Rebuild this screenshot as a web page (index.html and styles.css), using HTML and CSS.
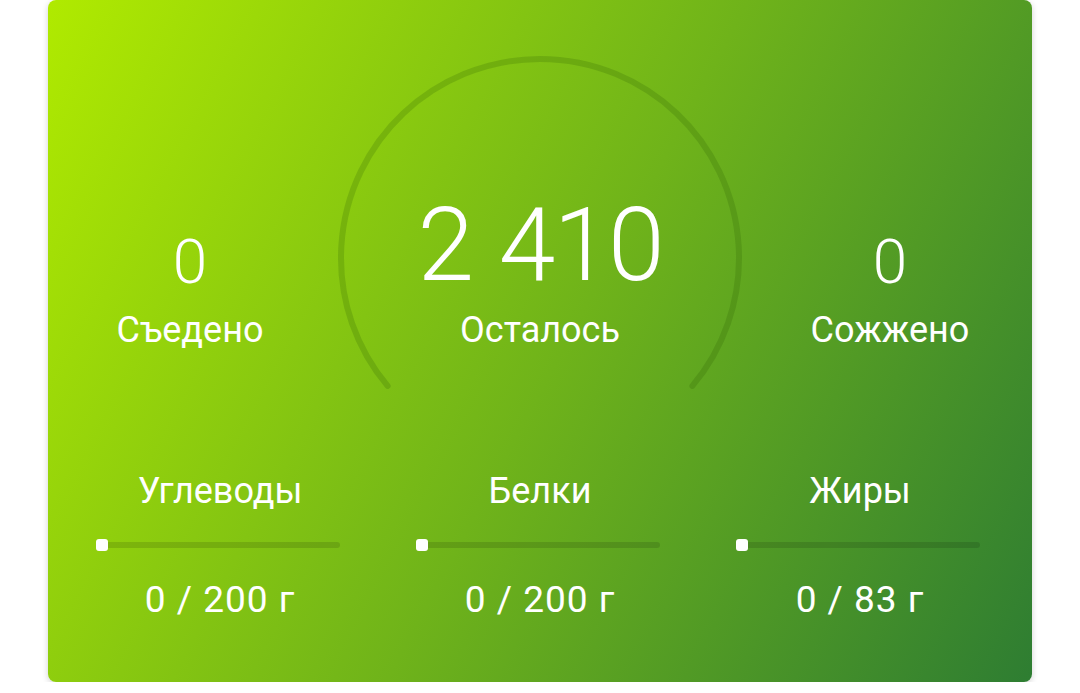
FILE: index.html
```html
<!DOCTYPE html>
<html lang="ru">
<head>
<meta charset="utf-8">
<link rel="stylesheet" href="styles.css">
</head>
<body>
<div class="card">
  <div class="summary">
    <div class="stat">
      <div class="num">0</div>
      <div class="label">Съедено</div>
    </div>
    <div class="stat stat-main">
      <svg class="gauge" width="416" height="340" viewBox="0 0 416 340">
        <path class="gauge-track" d="M 55.6 330.9 A 199 199 0 1 1 360.4 330.9" fill="none"/>
      </svg>
      <div class="num num-big">2 410</div>
      <div class="label">Осталось</div>
    </div>
    <div class="stat">
      <div class="num">0</div>
      <div class="label">Сожжено</div>
    </div>
  </div>
  <div class="macros">
    <div class="macro">
      <div class="macro-name">Углеводы</div>
      <div class="bar"><div class="thumb"></div></div>
      <div class="macro-val">0 / 200 г</div>
    </div>
    <div class="macro">
      <div class="macro-name">Белки</div>
      <div class="bar"><div class="thumb"></div></div>
      <div class="macro-val">0 / 200 г</div>
    </div>
    <div class="macro">
      <div class="macro-name">Жиры</div>
      <div class="bar"><div class="thumb"></div></div>
      <div class="macro-val">0 / 83 г</div>
    </div>
  </div>
</div>
</body>
</html>
```
FILE: styles.css
```css
* { box-sizing: border-box; }
html, body { margin: 0; padding: 0; background: #fff; }
body {
  font-family: Roboto, "Noto Sans", sans-serif;
  color: #fff;
}
.card {
  margin: 0 48px;
  height: 682px;
  border-radius: 8px;
  background: linear-gradient(118deg, #b0ea00 0%, #6fb31a 52%, #2e7d32 100%);
  box-shadow: 0 2px 6px rgba(0,0,0,0.18);
  padding-top: 55px;
}
.summary {
  display: grid;
  grid-template-columns: 1fr 416px 1fr;
  height: 340px;
  align-items: end;
  padding-bottom: 45px;
}
.stat {
  display: flex;
  flex-direction: column;
  align-items: center;
}
.stat-main { position: relative; height: 100%; justify-content: flex-end; }
.gauge {
  position: absolute;
  left: 0;
  top: 0;
  width: 416px;
  height: 340px;
  overflow: visible;
}
.gauge-track {
  stroke: rgba(40, 90, 0, 0.2);
  stroke-width: 6;
  stroke-linecap: round;
}
.num {
  font-size: 62px;
  font-weight: 300;
  line-height: 60px;
  margin-bottom: 18px;
}
.num-big {
  font-size: 102px;
  font-weight: 300;
  letter-spacing: -2px;
  word-spacing: 4px;
  line-height: 100px;
  margin-bottom: 15px;
  position: relative;
}
.label {
  font-size: 36px;
  line-height: 40px;
  position: relative;
}
.macros {
  display: grid;
  grid-template-columns: repeat(3, 1fr);
  padding: 76px 12px 0;
}
.macro {
  display: flex;
  flex-direction: column;
  align-items: center;
}
.macro-name {
  font-size: 36px;
  line-height: 40px;
}
.bar {
  width: 240px;
  height: 6px;
  border-radius: 3px;
  background: rgba(0, 0, 0, 0.12);
  margin: 31px 0 32px;
  position: relative;
}
.thumb {
  position: absolute;
  left: -4px;
  top: -3px;
  width: 12px;
  height: 12px;
  border-radius: 3px;
  background: #fff;
}
.macro-val {
  font-size: 37px;
  letter-spacing: 1px;
  line-height: 40px;
}
```
